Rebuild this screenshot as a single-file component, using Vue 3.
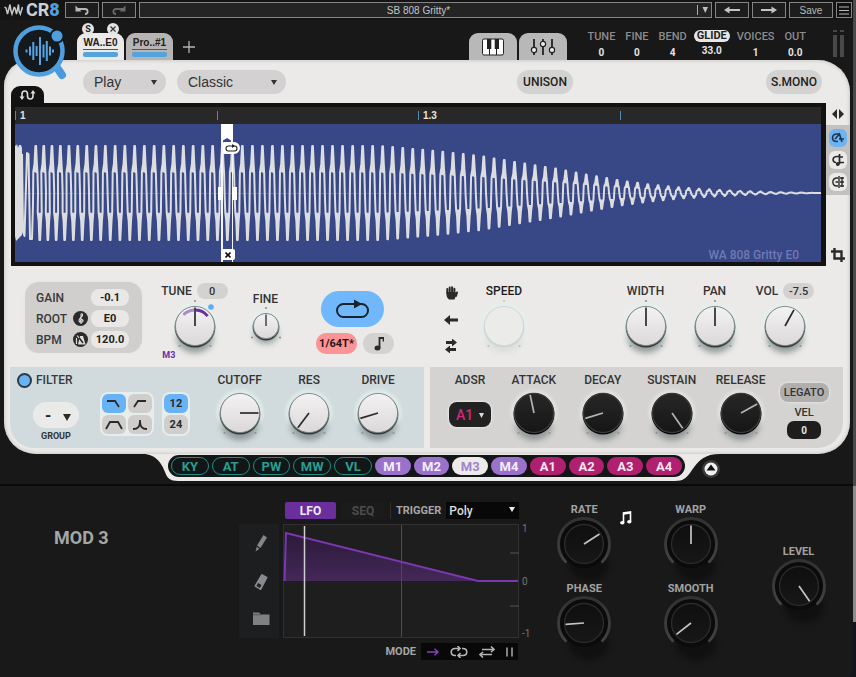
<script setup>
import { h, ref } from 'vue'

const polar = (c, r, deg) => {
  const a = (deg * Math.PI) / 180
  return [c + r * Math.sin(a), c - r * Math.cos(a)]
}
const arc = (c, r, from, to) => {
  const [x1, y1] = polar(c, r, from)
  const [x2, y2] = polar(c, r, to)
  return `M${x1} ${y1}A${r} ${r} 0 ${to - from > 180 ? 1 : 0} 1 ${x2} ${y2}`
}

const Knob = (props) => {
  const kind = props.kind || 'light'
  const r = kind === 'small' ? 13 : 20
  const size = kind === 'small' ? 38 : 54
  const c = size / 2
  const [tx, ty] = polar(c, r - 1.5, props.angle)
  const parts = []
  const dot = (x, y) => h('circle', { cx: x, cy: y, r: 1.1, fill: '#8f9492', opacity: props.off ? 0.4 : 1 })
  if (kind === 'mod') {
    parts.push(
      h('ellipse', { cx: c + 5, cy: c + 21, rx: 20, ry: 16, fill: '#000', opacity: 0.35, filter: 'url(#soft)' }),
      h('circle', { cx: c, cy: c, r: 24, fill: '#0b0b0b' }),
      h('path', { d: arc(c, 25.5, -134, 134), fill: 'none', stroke: 'url(#ring)', 'stroke-width': 2.8, 'stroke-linecap': 'round' }),
      h('circle', { cx: c, cy: c, r: 19.5, fill: 'url(#modface)', stroke: '#2a2a2a', 'stroke-width': 1.4 })
    )
  } else {
    const dark = kind === 'dark'
    parts.push(
      h('circle', { cx: c, cy: c, r: r + 3.5, fill: dark ? '#e6e6e4' : '#e4f0ef', opacity: 0.75, filter: 'url(#soft1)' }),
      h('ellipse', { cx: c, cy: c + r * 0.6, rx: r * 0.9, ry: r * 0.75, fill: '#3a4a4a', opacity: props.off ? 0.08 : 0.5, filter: 'url(#soft)' })
    )
    const b = kind === 'small' ? 14 : 15.5
    const dy = kind === 'small' ? 11.5 : 20
    if (props.top) parts.push(dot(c, c - r - 5))
    parts.push(dot(c - b, c + dy), dot(c + b, c + dy))
    parts.push(
      h('circle', { cx: c, cy: c + 1, r: r + 0.5, fill: dark ? '#060606' : props.off ? '#ced5d4' : 'url(#rim)' }),
      h('circle', { cx: c, cy: c, r: r - 0.4, fill: dark ? 'url(#darkface)' : props.off ? '#ebebea' : 'url(#face)', stroke: dark ? '#3a3a3a' : props.off ? '#d2d6d5' : '#7c8583', 'stroke-width': dark ? 1.4 : 0.9 })
    )
  }
  if (props.arcs) {
    parts.push(
      h('path', { d: arc(c, 16, -46, -3), fill: 'none', stroke: '#a98acb', 'stroke-width': 2.8 }),
      h('path', { d: arc(c, 16, 3, 52), fill: 'none', stroke: '#6a2fa6', 'stroke-width': 2.8 }),
      h('circle', { cx: 43, cy: 8, r: 2.8, fill: '#5aaef5' })
    )
  }
  if (!props.off) {
    parts.push(h('line', {
      x1: c, y1: c, x2: tx, y2: ty,
      stroke: kind === 'dark' ? '#b4b4b4' : kind === 'mod' ? '#c4c4c4' : '#2b2b2b',
      'stroke-width': kind === 'small' ? 1.3 : 1.7
    }))
  }
  return h('span', { class: 'knob' }, [
    h('svg', { width: size, height: size, viewBox: `0 0 ${size} ${size}`, overflow: 'visible', 'aria-hidden': 'true' }, parts),
    h('input', { type: 'range', id: props.id, min: 0, max: 360, value: props.angle, disabled: props.off })
  ])
}
Knob.props = { id: String, angle: Number, kind: String, top: Boolean, off: Boolean, arcs: Boolean }

/* Decaying waveform */
const levels = [[0, 47], [365, 47], [421, 42], [465, 37], [512, 29], [543, 24], [574, 18], [605, 12.5], [635, 8.5], [666, 5.5], [697, 3.5], [728, 2], [755, 1], [806, 0]]
const level = (x) => {
  for (let i = 1; i < levels.length; i++) {
    if (x <= levels[i][0]) {
      const [x0, a0] = levels[i - 1]
      const [x1, a1] = levels[i]
      return a0 + ((a1 - a0) * (x - x0)) / (x1 - x0)
    }
  }
  return 0
}
const mid = 69
let line = 'M7 30L8 108L9.500 112L12 29L13.500 30L15 115L17 115L18 80'
let tips = 'M0 21L1 22L2 20L3 24L4 21L6 21L7 24L7 111L5 113L3 115L1 117L0 112Z'
let px = 20.7
let n = 0
while (px < 800) {
  const P = n < 8 ? 8 + n * 0.2 : px < 200 ? 9.75 : px < 420 ? 10.02 : 10.25
  const A = level(px)
  const H = P / 2
  const B = level(px + H)
  const pt = (dx, a) => `${(px + dx).toFixed(1)} ${(mid + a).toFixed(1)}`
  const crest = `${pt(-2.4, -0.45 * A)}L${pt(-1.2, -0.62 * A)}L${pt(-0.3, -A)}L${pt(0.4, -A)}L${pt(1.2, -0.62 * A)}L${pt(1.8, -0.42 * A)}`
  const trough = `${pt(H - 2, 0.42 * B)}L${pt(H - 1, 0.6 * B)}L${pt(H - 0.3, B)}L${pt(H + 0.4, B)}L${pt(H + 1.3, 0.6 * B)}L${pt(H + 2, 0.42 * B)}`
  line += `L${crest}L${pt(2.3, 0)}L${trough}`
  tips += `M${crest}ZM${trough}Z`
  px += P
  n++
}
line += 'L806 69'

const globals = [
  ['TUNE', '0'], ['FINE', '0'], ['BEND', '4'], ['GLIDE', '33.0'], ['VOICES', '1'], ['OUT', '0.0']
]
const bars = [[15.5, 3], [19, 9], [22.3, 18], [25.6, 10], [29, 28], [32.500, 13], [35.8, 20], [39, 9], [42, 3]]
const rulerMarks = ['1', '', '1.3', '']
const filterShapes = [
  { name: 'Low pass', d: 'M4 6H12L16 12' },
  { name: 'High pass', d: 'M5 12L9 6H17' },
  { name: 'Band pass', d: 'M3 13L7 6H15L19 13' },
  { name: 'Peak', d: 'M4 13C9 13 11 11 11 4C11 11 13 13 18 13' }
]
const filterKnobs = [['CUTOFF', 90], ['RES', 217], ['DRIVE', 253]]
const envKnobs = [['ATTACK', 348], ['DECAY', 253], ['SUSTAIN', 145], ['RELEASE', 61]]
const sources = [
  ['KY', 'ext'], ['AT', 'ext'], ['PW', 'ext'], ['MW', 'ext'], ['VL', 'ext'],
  ['M1', 'mod'], ['M2', 'mod'], ['M3', 'mod'], ['M4', 'mod'],
  ['A1', 'amp'], ['A2', 'amp'], ['A3', 'amp'], ['A4', 'amp']
]
const modKnobs = [['RATE', 57], ['WARP', 0], ['PHASE', 266], ['SMOOTH', 232]]
const selected = ref('M3')
const shape = ref(0)
const filterOn = ref(true)
</script>

<template>
  <div class="window">
    <svg class="defs" width="0" height="0" aria-hidden="true">
      <defs>
        <filter id="soft" x="-50%" y="-50%" width="200%" height="200%"><feGaussianBlur stdDeviation="3" /></filter>
        <filter id="soft1" x="-50%" y="-50%" width="200%" height="200%"><feGaussianBlur stdDeviation="1.5" /></filter>
        <linearGradient id="face" x1="0" y1="0" x2="0" y2="1"><stop offset="0" stop-color="#f3f2f2" /><stop offset="1" stop-color="#dcd8da" /></linearGradient>
        <linearGradient id="rim" x1="0" y1="0" x2="0" y2="1"><stop offset="0" stop-color="#9aa3a1" /><stop offset="1" stop-color="#2f3836" /></linearGradient>
        <linearGradient id="darkface" x1="0" y1="0" x2="0" y2="1"><stop offset="0" stop-color="#272727" /><stop offset="1" stop-color="#161616" /></linearGradient>
        <linearGradient id="modface" x1="0" y1="0" x2="0" y2="1"><stop offset="0" stop-color="#0f0f0f" /><stop offset="1" stop-color="#171717" /></linearGradient>
        <linearGradient id="ring" x1="0" y1="0" x2="0" y2="1"><stop offset="0" stop-color="#323232" /><stop offset="1" stop-color="#424242" /></linearGradient>
        <linearGradient id="lfofill" x1="0" y1="0" x2="0" y2="1"><stop offset="0" stop-color="#2a1a38" /><stop offset="1" stop-color="#452859" /></linearGradient>
      </defs>
    </svg>
    <div class="app">
      <div class="topbar">
        <svg class="waves" width="19" height="14" viewBox="0 0 19 14" aria-hidden="true">
          <path d="M0.500 4L2 5L3.500 11L6 1.500L7 8M6.500 6L8 11L10 5M9.500 4L11 5L12.500 11L14.500 1.500L15 8L16.300 11L18.500 4" fill="none" stroke="#c8c8c8" stroke-width="1.500" />
        </svg>
        <span class="brand">CR<b>8</b></span>
        <button class="tb" aria-label="Undo"><svg width="14" height="10" viewBox="0 0 14 10"><path d="M3 4H10C13.500 4 13.500 9 10 9" fill="none" stroke="#b8b8b8" stroke-width="1.800" /><path d="M0.500 6.500V0.500L6.500 6.500Z" fill="#b8b8b8" /></svg></button>
        <button class="tb" aria-label="Redo"><svg width="14" height="10" viewBox="0 0 14 10"><path d="M11 4H4C0.500 4 0.500 9 4 9" fill="none" stroke="#6a6a6a" stroke-width="1.800" /><path d="M13.500 6.500V0.500L7.500 6.500Z" fill="#6a6a6a" /></svg></button>
        <label class="preset">
          <select aria-label="Preset"><option>SB 808 Gritty*</option></select>
          <svg width="14" height="10" viewBox="0 0 14 10"><path d="M0.500 0V10" stroke="#aaa" /><path d="M5.500 2H11L8.250 8Z" fill="#c0c0c0" /></svg>
        </label>
        <button class="tb" aria-label="Previous preset"><svg width="18" height="8" viewBox="0 0 18 8"><path d="M5 4H17" stroke="#c4c4c4" stroke-width="2" /><path d="M1 4L6.500 0.500V7.500Z" fill="#c4c4c4" /></svg></button>
        <button class="tb" aria-label="Next preset"><svg width="18" height="8" viewBox="0 0 18 8"><path d="M1 4H13" stroke="#c4c4c4" stroke-width="2" /><path d="M17 4L11.500 0.500V7.500Z" fill="#c4c4c4" /></svg></button>
        <button class="tb save">Save</button>
        <button class="tb menu" aria-label="Menu"><svg width="10" height="9" viewBox="0 0 10 9"><path d="M0 1H10M0 4.500H10M0 8H10" stroke="#b8b8b8" /></svg></button>
      </div>

      <header class="header">
        <svg class="logo" width="60" height="60" viewBox="0 0 60 60" aria-hidden="true">
          <path d="M47 46L51 52" stroke="#4a9ade" stroke-width="8" stroke-linecap="round" />
          <circle cx="28" cy="28" r="23.500" fill="#14191e" stroke="#4f9fdf" stroke-width="4.500" />
          <circle cx="46" cy="13" r="7.500" fill="#14191e" />
          <circle cx="46" cy="13" r="5.500" fill="#4f9fdf" />
          <path v-for="b in bars" :key="b[0]" :d="`M${b[0]} ${28 - b[1] / 2}V${28 + b[1] / 2}`" stroke="#55a5e2" stroke-width="2" />
        </svg>
        <div class="tab active">
          <button class="badge" aria-label="Solo"><span>S</span></button>
          <button class="badge right" aria-label="Close"><svg width="8" height="8" viewBox="0 0 8 8"><path d="M1.500 1.500L6.500 6.500M6.500 1.500L1.500 6.500" stroke="#333" stroke-width="1.200" /></svg></button>
          <button class="tabname">WA..E0</button><i class="rule"></i><i class="bar"></i>
        </div>
        <div class="tab">
          <button class="tabname">Pro..#1</button><i class="rule"></i><i class="bar"></i>
        </div>
        <button class="plus" aria-label="Add sample"><svg width="12" height="12" viewBox="0 0 12 12"><path d="M6 0V12M0 6H12" stroke="#b4b4b4" stroke-width="1.300" /></svg></button>
        <span class="grow"></span>
        <button class="view" aria-label="Keyboard"><svg width="22" height="18" viewBox="0 0 22 18"><rect x="0.500" y="1" width="21" height="16" rx="1.500" fill="#fff" stroke="#222" /><path d="M7.500 1V17M14.500 1V17" stroke="#222" /><path d="M5 1H9.300V11H5ZM12.700 1H17V11H12.700Z" fill="#222" /></svg></button>
        <button class="view" aria-label="Mixer"><svg width="26" height="18" viewBox="0 0 26 18"><path d="M4 1V17M13 1V17M22 1V17" stroke="#222" stroke-width="1.800" /><g fill="#eee" stroke="#222" stroke-width="1.200"><circle cx="4" cy="12" r="2.600" /><circle cx="13" cy="6" r="2.600" /><circle cx="22" cy="12" r="2.600" /></g></svg></button>
        <dl class="globals">
          <div v-for="g in globals" :key="g[0]"><dt :class="{ lit: g[0] === 'GLIDE' }">{{ g[0] }}</dt><dd>{{ g[1] }}</dd></div>
        </dl>
        <span class="meter"><i></i><i></i></span>
      </header>

      <main class="body">
        <div class="tools">
          <label class="drop play"><select aria-label="Play mode"><option>Play</option></select><svg width="6" height="5" viewBox="0 0 6 5"><path d="M0 0H6L3 5Z" fill="#333" /></svg></label>
          <label class="drop classic"><select aria-label="Engine"><option>Classic</option></select><svg width="6" height="5" viewBox="0 0 6 5"><path d="M0 0H6L3 5Z" fill="#333" /></svg></label>
          <span class="grow"></span>
          <button class="chip">UNISON</button>
          <span class="gap-mid"></span>
          <button class="chip">S.MONO</button>
          <button class="curve" aria-label="Zero crossing"><svg width="18" height="12" viewBox="0 0 18 12"><path d="M3 9V5C3 1 8.500 1 8.500 5V7C8.500 11 14 11 14 7V3" fill="none" stroke="#ddd" stroke-width="1.600" /><path d="M0.500 7.500H5.500L3 11ZM11.500 4.500H16.500L14 1Z" fill="#ddd" /></svg></button>
        </div>

        <div class="waverow">
          <div class="frame">
            <div class="ruler"><span v-for="(m, i) in rulerMarks" :key="i">{{ m }}</span></div>
            <div class="wave">
              <svg width="100%" height="138" viewBox="0 0 806 138" preserveAspectRatio="none" aria-hidden="true">
                <path d="M0 69.500H806" stroke="#5663a0" />
                <path :d="tips" fill="#dcdddf" />
                <path :d="line" fill="none" stroke="#dcdddf" stroke-width="2" stroke-linejoin="round" />
              </svg>
              <div class="loop">
                <i class="cap"></i>
                <svg class="home" width="8" height="4" viewBox="0 0 8 4"><path d="M0 4V2.500L4 0L8 2.500V4Z" fill="#3a4688" /></svg>
                <button class="looptag" aria-label="Loop handle"><svg width="13" height="8" viewBox="0 0 13 8"><rect x="1" y="2" width="11" height="5" rx="2.500" fill="none" stroke="#222" stroke-width="1.100" /><path d="M7 0L10 2L7 4Z" fill="#222" /></svg></button>
                <i class="grip"></i><i class="grip end"></i>
                <button class="loopx" aria-label="Remove loop"><svg width="6" height="6" viewBox="0 0 6 6"><path d="M0.500 0.500L5.500 5.500M5.500 0.500L0.500 5.500" stroke="#111" stroke-width="1.600" /></svg></button>
              </div>
              <span class="watermark">WA 808 Gritty E0</span>
            </div>
          </div>
          <div class="side">
            <button class="flat" aria-label="Zoom width"><svg width="12" height="10" viewBox="0 0 12 10"><path d="M5 0V10L0 5ZM7 0V10L12 5Z" fill="#2a2a2a" /></svg></button>
            <div class="snaps">
              <button class="on" aria-label="Snap to transients"><svg width="14" height="14" viewBox="0 0 14 14"><path d="M9 3H6C0 3 0 10.500 6 10.500H7M4 8L8.500 3L10 8L11 11M8 8H13" fill="none" stroke="#1d3550" stroke-width="1.600" /></svg></button>
              <button aria-label="Snap to beats"><svg width="14" height="14" viewBox="0 0 14 14"><path d="M9 3.500H6C1 3.500 1 9.500 5 9.500M8.500 1V11M8 4H12M8 9.500H13" fill="none" stroke="#2a2a2a" stroke-width="1.700" /><circle cx="6.800" cy="11" r="2" fill="#2a2a2a" /></svg></button>
              <button aria-label="Snap to grid"><svg width="14" height="14" viewBox="0 0 14 14"><path d="M7 3H6C0.500 3 0.500 11 6 11H7M4.500 7H7M8 1V13M9 3H13M9 7H13M9 11H13M11 2V12" fill="none" stroke="#2a2a2a" stroke-width="1.400" /></svg></button>
            </div>
            <span class="grow"></span>
            <button class="flat" aria-label="Crop"><svg width="14" height="14" viewBox="0 0 14 14"><path d="M3.500 0V10.500H14M0 3.500H10.500V14" fill="none" stroke="#2a2a2a" stroke-width="2.400" /></svg></button>
          </div>
        </div>

        <div class="controls">
          <div class="gaincard">
            <label for="gain">GAIN</label><span></span><input id="gain" value="-0.1">
            <label for="root">ROOT</label>
            <button class="round" aria-label="Detect root"><svg width="14" height="14" viewBox="0 0 14 14"><path d="M7 12V3C7 1 9 1.500 8.500 3.500C8 5 4.500 6.500 5 9C5.500 11 9.500 10.500 9 8.500C8.500 7 6 7.500 6.500 9" fill="none" stroke="#ddd" stroke-width="1.100" /></svg></button>
            <input id="root" value="E0">
            <label for="bpm">BPM</label>
            <button class="round" aria-label="Metronome"><svg width="14" height="14" viewBox="0 0 14 14"><path d="M6 3H9L11.500 11.500H4Z" fill="#ddd" /><path d="M3 2L9 10" stroke="#2b2b2b" stroke-width="1.600" /><path d="M3 2.500L5 5M2.500 5V11" stroke="#ddd" stroke-width="1.200" /></svg></button>
            <input id="bpm" value="120.0">
          </div>
          <div class="cell">
            <div class="lab"><label for="tune">TUNE</label><input aria-label="Tune value" value="0"></div>
            <Knob id="tune" :angle="0" top arcs />
            <span class="tag">M3</span>
          </div>
          <div class="cell fine">
            <label class="lab" for="fine">FINE</label>
            <Knob id="fine" :angle="0" kind="small" top />
          </div>
          <div class="loopbox">
            <button class="bigloop" aria-label="Loop"><svg width="34" height="20" viewBox="0 0 34 20"><rect x="1" y="5" width="31" height="13" rx="6.500" fill="none" stroke="#18222c" stroke-width="2" /><path d="M18 0.500L26 5L18 9.500Z" fill="#18222c" /></svg></button>
            <button class="div">1/64T*</button>
            <button class="note" aria-label="Note sync"><svg width="10" height="14" viewBox="0 0 10 14"><path d="M5.500 11V1H9.500V4.500" fill="none" stroke="#2a2a2a" stroke-width="1.800" /><ellipse cx="3.500" cy="11" rx="3" ry="2.500" fill="#2a2a2a" /></svg></button>
          </div>
          <div class="dirs">
            <button aria-label="Hold"><svg width="14" height="14" viewBox="0 0 14 14"><path d="M3.300 7V3M5.700 7V1.500M8.100 7V1.200M10.400 7.500V2.700M12 10L13 6.500" stroke="#2a2a2a" stroke-width="2" stroke-linecap="round" /><path d="M2.400 6H11.300L12.500 8L10.500 13.500H5C2.500 12 2.400 9 2.400 6Z" fill="#2a2a2a" /></svg></button>
            <button aria-label="Reverse"><svg width="14" height="10" viewBox="0 0 14 10"><path d="M0 5L6 0V3.500H14V6.500H6V10Z" fill="#2a2a2a" /></svg></button>
            <button aria-label="Ping-pong"><svg width="12" height="14" viewBox="0 0 12 14"><path d="M12 3.500L7 -0.500V2H1V5H7V7.500ZM0 10.500L5 6.500V9H11V12H5V14.500Z" fill="#2a2a2a" /></svg></button>
          </div>
          <div class="cell"><label class="lab strong" for="speed">SPEED</label><Knob id="speed" :angle="0" top off /></div>
          <span></span>
          <div class="cell"><label class="lab" for="width">WIDTH</label><Knob id="width" :angle="0" top /></div>
          <div class="cell"><label class="lab" for="pan">PAN</label><Knob id="pan" :angle="0" top /></div>
          <div class="cell">
            <div class="lab"><label for="vol">VOL</label><input aria-label="Volume value" value="-7.5"></div>
            <Knob id="vol" :angle="29" />
          </div>
        </div>

        <div class="panels">
          <section class="filter">
            <div class="fleft">
              <label class="power"><input v-model="filterOn" type="checkbox">FILTER</label>
              <label class="group"><select aria-label="Filter group"><option>-</option></select><svg width="8" height="7" viewBox="0 0 8 7"><path d="M0 0H8L4 7Z" fill="#2a2a2a" /></svg></label>
              <span class="tiny">GROUP</span>
            </div>
            <div class="shapes">
              <div class="pad two">
                <button v-for="(s, i) in filterShapes" :key="s.name" :class="{ on: i === shape }" :aria-label="s.name" @click="shape = i"><svg width="22" height="18" viewBox="0 0 22 18"><path :d="s.d" fill="none" stroke="#2a2a2a" stroke-width="1.800" /></svg></button>
              </div>
              <div class="pad"><button class="on">12</button><button>24</button></div>
            </div>
            <div v-for="k in filterKnobs" :key="k[0]" class="cell">
              <label class="lab" :for="k[0]">{{ k[0] }}</label><Knob :id="k[0]" :angle="k[1]" />
            </div>
          </section>
          <section class="env">
            <div class="adsr">
              <label class="lab" for="adsr">ADSR</label>
              <span class="a1"><select id="adsr"><option>A1</option></select><svg width="5" height="5" viewBox="0 0 5 5"><path d="M0 0H5L2.500 5Z" fill="#ddd" /></svg></span>
            </div>
            <div v-for="k in envKnobs" :key="k[0]" class="cell">
              <label class="lab" :for="k[0]">{{ k[0] }}</label><Knob :id="k[0]" :angle="k[1]" kind="dark" />
            </div>
            <div class="vel">
              <button>LEGATO</button>
              <label for="vel">VEL</label>
              <input id="vel" value="0">
            </div>
          </section>
        </div>
      </main>

      <nav class="dock">
        <svg width="40" height="27" viewBox="0 0 40 27" aria-hidden="true"><path d="M0 0H5C18 0 24 10 27 18C29 24 32 27 40 27V0Z" fill="#ebeae8" /></svg>
        <div class="dockmid">
          <div class="pills">
            <button v-for="s in sources" :key="s[0]" :class="[s[1], { sel: s[0] === selected }]" @click="selected = s[0]">{{ s[0] }}</button>
          </div>
        </div>
        <svg width="45" height="27" viewBox="0 0 45 27" aria-hidden="true"><path d="M0 0H45C30 0 24 6 17 16C12 24 8 27 0 27Z" fill="#ebeae8" /></svg>
        <div class="dockend">
          <button aria-label="Collapse"><svg width="18" height="18" viewBox="0 0 18 18"><circle cx="9" cy="9" r="9" fill="#3b3b3b" /><circle cx="9" cy="9" r="6.500" fill="#f2f2f2" /><path d="M9 4.500L13.500 10.500H4.500Z" fill="#111" /></svg></button>
        </div>
      </nav>

      <section class="modulator">
        <h2>MOD 3</h2>
        <div class="editor">
          <div class="modtop">
            <button class="lfo">LFO</button><button class="seq">SEQ</button>
            <label for="trigger">TRIGGER</label>
            <span class="trig"><select id="trigger"><option>Poly</option></select><svg width="6" height="5" viewBox="0 0 6 5"><path d="M0 0H6L3 5Z" fill="#eee" /></svg></span>
          </div>
          <div class="pens">
            <button aria-label="Pencil"><svg width="14" height="18" viewBox="0 0 14 18"><path d="M9.500 1L13 3.500L6.500 14L3 11.500ZM2.700 12.700L5.500 14.700L1.500 17.500Z" fill="#858585" /></svg></button>
            <button aria-label="Eraser"><svg width="16" height="18" viewBox="0 0 16 18"><path d="M9 2L13.500 4.500L7.500 16L2.500 13Z" fill="#8a8a8a" stroke="#8a8a8a" stroke-width="2" stroke-linejoin="round" /><path d="M5 10L8.500 12L6.800 15L3.500 13Z" fill="#222" /></svg></button>
            <button aria-label="Open"><svg width="17" height="13" viewBox="0 0 17 13"><path d="M0 0.500H6L8 2.500H16.500V13H0Z" fill="#808080" /><path d="M0 2.700H8" stroke="#444" stroke-width="0.700" /></svg></button>
          </div>
          <svg class="graph" width="100%" height="114" viewBox="0 0 236 114" preserveAspectRatio="none" role="img" aria-label="LFO shape">
            <rect x="0.500" y="0.500" width="235" height="113" fill="#1e1e1e" stroke="#303030" />
            <path d="M1.500 57L3 9L195 57Z" fill="url(#lfofill)" />
            <path d="M118.500 1V113" stroke="#4c4c4c" />
            <path d="M227 29H236M227 82H236" stroke="#555" />
            <path d="M1.500 57L3 9L195 57H235" fill="none" stroke="#7a38b0" stroke-width="2" />
            <path d="M21.500 2V112" stroke="#cfcfcf" stroke-width="1.500" />
          </svg>
          <div class="scale"><span>1</span><span>0</span><span>-1</span></div>
          <div class="mode">
            <span>MODE</span>
            <div>
              <button aria-label="One shot"><svg width="12" height="8" viewBox="0 0 12 8"><path d="M0 4H11M7.500 0.800L11 4L7.500 7.200" fill="none" stroke="#8a3fc6" stroke-width="1.500" /></svg></button>
              <button aria-label="Loop"><svg width="18" height="12" viewBox="0 0 18 12"><path d="M6 9.500H5C0 9.500 0 2.500 5 2.500H10M12 2.500H13C18 2.500 18 9.500 13 9.500H8M7.500 0L10 2.500L7.500 5M10.500 7L8 9.500L10.500 12" fill="none" stroke="#b4b4b4" stroke-width="1.600" /></svg></button>
              <button aria-label="Ping-pong"><svg width="16" height="12" viewBox="0 0 16 12"><path d="M3 3.500H15M12 0.500L15 3.500L12 6M13 8.500H1M4 6L1 8.500L4 11.500" fill="none" stroke="#b4b4b4" stroke-width="1.600" /></svg></button>
              <button aria-label="Hold"><svg width="7" height="10" viewBox="0 0 7 10"><path d="M1 0.500V9.500M6 0.500V9.500" stroke="#aaa" stroke-width="1.500" /></svg></button>
            </div>
          </div>
        </div>
        <div class="modknobs">
          <div v-for="k in modKnobs" :key="k[0]" class="mk">
            <label :for="k[0]">{{ k[0] }}</label><Knob :id="k[0]" :angle="k[1]" kind="mod" />
            <button v-if="k[0] === 'RATE'" class="sync" aria-label="Tempo sync"><svg width="12" height="14" viewBox="0 0 12 14"><path d="M3.500 11.500V2L10.500 1V10.500M3.500 3L10.500 2" fill="none" stroke="#fff" stroke-width="1.600" /><ellipse cx="2.300" cy="11.800" rx="2.200" ry="1.800" fill="#fff" /><ellipse cx="9.300" cy="10.800" rx="2.200" ry="1.800" fill="#fff" /></svg></button>
          </div>
        </div>
        <div class="mk lone"><label for="level">LEVEL</label><Knob id="level" :angle="145" kind="mod" /></div>
      </section>
    </div>
  </div>
</template>

<style>
body { margin: 0; background: #171717; }
.knob { position: relative; display: block; line-height: 0; }
.knob input { position: absolute; inset: 0; width: 100%; height: 100%; margin: 0; opacity: 0; cursor: pointer; }
</style>

<style scoped>
.window {
  font-family: Roboto, "Liberation Sans", sans-serif;
  font-size: 12px;
  padding-right: 3px;
  background: linear-gradient(#4a4a4a 0 486px, #8c8c8c 486px 622px, #11151c 622px);
}
.defs { position: absolute; }
.app { min-height: 100vh; background: #181818; display: flex; flex-direction: column; border-bottom-right-radius: 6px; }
button, input, select { font-family: inherit; border: 0; padding: 0; margin: 0; background: none; color: inherit; box-sizing: border-box; }
button { display: flex; align-items: center; justify-content: center; cursor: pointer; }
select { appearance: none; outline: 0; }
.grow { flex: 1; }

.topbar { height: 20px; display: flex; align-items: center; gap: 3px; padding: 0 1px 0 4px; background: #141414; box-sizing: border-box; }
.waves { flex: none; }
.brand { width: 36px; font-size: 18px; line-height: 20px; font-weight: 700; color: #cfcfcf; }
.brand b { color: #4f9fdf; }
.tb { width: 34px; height: 16px; border: 1px solid #858585; background: #1d1d1d; flex: none; }
.save { width: 44px; font: 10px "Liberation Sans", sans-serif; color: #b8b8b8; }
.menu { width: 16px; background: #111; }
.preset { flex: 1; display: flex; align-items: center; height: 16px; border: 1px solid #858585; background: #242424; box-sizing: border-box; }
.preset select { flex: 1; font: 10px "Liberation Sans", sans-serif; color: #c4c4c4; text-align-last: center; }

.header { position: relative; z-index: 2; height: 40px; box-sizing: border-box; padding: 0 9px 0 77px; display: flex; align-items: flex-end; gap: 2px; }
.logo { position: absolute; left: 11px; top: 3px; }
.tab { position: relative; width: 47px; height: 27px; background: #b6b5b4; border-radius: 9px 9px 0 0; padding: 4px 6px 0; box-sizing: border-box; }
.tab.active { background: #ebeae8; }
.tabname { width: 100%; height: 12px; font: 700 10px/12px "Liberation Sans", sans-serif; color: #222; white-space: nowrap; }
.rule { display: block; height: 1px; background: #555; }
.bar { display: block; height: 5px; margin-top: 2px; border-radius: 2px; background: #55a3dd; }
.badge { position: absolute; left: 5px; top: -10px; width: 12px; height: 12px; border-radius: 50%; background: #e4e4e4; color: #222; font-size: 9px; font-weight: 700; line-height: 12px; }
.badge.right { left: auto; right: 5px; }
.plus { height: 27px; width: 27px; }
.view { width: 48px; height: 27px; background: #b9b8b8; border-radius: 9px 9px 0 0; }
.globals { margin: 0 25px 0 18px; height: 30px; display: flex; gap: 10px; font-size: 11px; text-align: center; }
.globals dt { height: 14px; line-height: 14px; color: #8c8c8c; font-weight: 500; }
.globals dt.lit { background: #e6e6e6; color: #222; border-radius: 6px; height: 12px; line-height: 12px; margin: 0 -3px 2px; padding: 0 3px; font-weight: 700; }
.globals dd { margin: 2px 0 0; height: 13px; line-height: 13px; font-size: 10px; font-weight: 700; color: #e4e4e4; }
.meter { display: flex; gap: 3px; height: 30px; }
.meter i { width: 4px; height: 27px; background: linear-gradient(#484848 0 2px, #181818 2px 5px, #484848 5px); }

.body { margin: 0 3px 0 4px; background: #ebeae8; border-radius: 26px 32px 32px 32px; padding: 0 6px 6px; box-shadow: inset 0 0 4px #bcbcb8; }
.tools { position: relative; height: 43px; display: flex; align-items: flex-start; padding: 10px 22px 0 73px; gap: 11px; box-sizing: border-box; }
.drop { position: relative; height: 24px; border-radius: 12px; background: #d3d1d1; display: flex; align-items: center; }
.drop select { width: 100%; height: 24px; padding-left: 11px; font: 14px "Liberation Sans", sans-serif; color: #333; border-radius: 12px; }
.drop svg { position: absolute; right: 9px; top: 10px; }
.play { width: 83px; }
.classic { width: 109px; }
.chip { height: 24px; width: 56px; border-radius: 12px; background: #d3d2d1; font-weight: 500; font-size: 12px; color: #222; box-shadow: 0 0 3px #dcebee; }
.gap-mid { width: 171px; }
.curve { position: absolute; left: 1px; bottom: 0; width: 33px; height: 17px; background: #121212; border-radius: 9px 9px 0 0; }

.waverow { display: flex; margin: 0 -6px 0 1px; }
.frame { flex: 1; min-width: 0; background: #121212; padding: 4px 5px 4px 4px; }
.ruler { height: 17px; display: grid; grid-template-columns: repeat(4, 1fr); align-items: center; background: #282828; color: #e4e4e4; font: 700 10px/9px "Liberation Sans", sans-serif; }
.ruler span { height: 9px; border-left: 1px solid #5288b4; padding-left: 4px; }
.wave { position: relative; height: 138px; background: #384786; }
.wave > svg { display: block; }
.watermark { position: absolute; right: 22px; bottom: 0; font-size: 12px; font-weight: 500; line-height: 14px; color: #6e79b6; }
.loop { position: absolute; left: 25.500%; top: 0; bottom: 0; width: 12px; border: 1px solid #f4f4f4; border-width: 0 1px 0 2px; box-sizing: border-box; }
.cap { position: absolute; left: -2px; right: -1px; top: 0; height: 18px; background: #fff; }
.home { position: absolute; left: 0; top: 14px; }
.looptag { position: absolute; left: 0; top: 18px; width: 17px; height: 12px; border-radius: 1px 6px 6px 1px; background: #fff; }
.grip { position: absolute; left: -5px; top: 63px; width: 5px; height: 13px; background: #fff; }
.grip.end { left: 9px; }
.loopx { position: absolute; left: -2px; bottom: 2px; width: 14px; height: 11px; border-radius: 2px; background: #fff; }
.side { width: 24px; display: flex; flex-direction: column; align-items: center; }
.flat { height: 22px; width: 24px; }
.snaps { width: 24px; height: 70px; background: #c3c1bf; display: flex; flex-direction: column; align-items: center; justify-content: center; gap: 4px; }
.snaps button { width: 18px; height: 18px; border-radius: 6px; background: #eceae8; }
.snaps .on { background: #6fb4f2; }

.controls { height: 101px; margin: 0 -6px; display: grid; grid-template-columns: minmax(0, 146fr) minmax(0, 89fr) minmax(0, 53fr) minmax(0, 128fr) minmax(0, 62fr) minmax(0, 44fr) minmax(0, 85fr) minmax(0, 69fr) minmax(0, 69fr) minmax(0, 72fr) minmax(0, 29fr); justify-items: center; align-items: start; }
.gaincard { justify-self: stretch; margin: 16px 8px 0 21px; height: 71px; padding: 7px 13px 9px 11px; border-radius: 14px; background: #d0cfce; box-sizing: border-box; display: grid; grid-template-columns: 35px 16px 38px; grid-auto-rows: 17px; row-gap: 4px; justify-content: space-between; align-items: center; box-shadow: 0 0 3px #dce4e4; }
.gaincard label { font-weight: 500; color: #3a3a3a; }
.gaincard input { width: 38px; height: 17px; border-radius: 8px; background: #e9e8e7; text-align: center; font-size: 11px; font-weight: 700; color: #222; }
.round { width: 15px; height: 15px; border-radius: 50%; background: #2b2b2b; }
.cell { position: relative; display: flex; flex-direction: column; align-items: center; padding-top: 17px; }
.lab { height: 16px; line-height: 17px; font-weight: 500; color: #333; display: flex; align-items: center; gap: 5px; white-space: nowrap; }
.lab.strong { color: #1c1c1c; }
.lab input { width: 31px; height: 16px; border-radius: 8px; background: #d3d2d1; text-align: center; font-size: 11px; font-weight: 500; color: #333; }
.tag { position: absolute; left: 1px; top: 84px; font-size: 9px; font-weight: 700; line-height: 11px; color: #6a2fa6; }
.fine { padding-top: 25px; }
.loopbox { justify-self: start; margin: 25px 0 0 24px; width: 79px; display: flex; flex-wrap: wrap; gap: 6px; }
.bigloop { width: 63px; height: 36px; margin-left: 5px; border-radius: 18px; background: #70b8fb; }
.div { width: 41px; height: 21px; border-radius: 10px; background: #fb9496; font-size: 11px; font-weight: 700; color: #2a1515; }
.note { width: 31px; height: 21px; border-radius: 10px; background: #d3d2d1; }
.dirs { display: flex; flex-direction: column; align-items: center; justify-content: space-between; height: 67px; margin-top: 20px; }

.panels { display: grid; grid-template-columns: 1fr 1fr; gap: 6px; padding-right: 1px; }
.panels section { height: 81px; display: grid; justify-items: center; align-items: start; }
.panels .cell { padding-top: 5px; }
.panels .cell .lab { margin-bottom: -2px; }
.filter { background: #d1dbde; grid-template-columns: 84fr 102fr 9fr 70fr 69fr 69fr 11fr; border-bottom-left-radius: 24px; }
.filter .cell:nth-of-type(3) { grid-column: 4; }
.fleft { display: flex; flex-direction: column; align-items: center; width: 100%; }
.power { align-self: flex-start; margin: 5px 0 0 7px; height: 16px; display: flex; align-items: center; gap: 4px; font-weight: 500; color: #3a3a3a; }
.power input { appearance: none; width: 15px; height: 15px; border: 2px solid #2c3a47; border-radius: 50%; background: #e0e0e0; }
.power input:checked { background: #68b2f7; }
.group { position: relative; width: 46px; height: 26px; margin-top: 14px; margin-left: 8px; border-radius: 13px; background: #eaeae9; }
.group select { width: 46px; height: 26px; padding-left: 12px; font-size: 16px; font-weight: 700; color: #222; }
.group svg { position: absolute; right: 8px; top: 12px; }
.tiny { margin: 3px 0 0 8px; font-size: 9px; font-weight: 700; line-height: 11px; color: #333; }
.shapes { display: flex; gap: 8px; margin-top: 25px; justify-self: start; padding-left: 6px; }
.pad { display: grid; gap: 2px; padding: 2px; border-radius: 8px; background: #e7ecec; }
.pad.two { grid-template-columns: 1fr 1fr; }
.pad button { width: 24px; height: 19px; border-radius: 6px; background: #cfcecd; font-size: 11px; font-weight: 700; color: #2a2a2a; }
.pad .on { background: #68b2f7; }
.env { background: #d4d3d1; grid-template-columns: 11fr 59fr 69fr 69fr 69fr 69fr 58fr 10fr; border-bottom-right-radius: 26px; }
.adsr { grid-column: 2; padding-top: 5px; display: flex; flex-direction: column; align-items: center; }
.a1 { position: relative; margin-top: 14px; width: 42px; height: 25px; border-radius: 8px; background: #222; box-shadow: 0 0 2px 1px #e8e8e8; }
.a1 select { width: 42px; height: 25px; padding-left: 7px; font-size: 14px; font-weight: 500; color: #d0287f; }
.a1 svg { position: absolute; right: 7px; top: 11px; }
.vel { display: flex; flex-direction: column; align-items: center; padding-top: 16px; color: #333; font-weight: 500; font-size: 11px; }
.vel button { width: 49px; height: 19px; border-radius: 8px; background: #b0afae; font-size: 11px; font-weight: 500; box-shadow: 0 0 2px 1px #dfe4e4; }
.vel label { line-height: 13px; margin: 4px 0 2px; }
.vel input { width: 34px; height: 18px; border-radius: 7px; background: #1d1d1d; color: #e4e4e4; text-align: center; font-size: 10px; font-weight: 700; }

.dock { display: flex; height: 27px; padding-left: 138px; }
.dock > svg { flex: none; display: block; }
.dockmid { flex: 497 1 0; background: #ebeae8; }
.pills { position: relative; height: 22px; margin: 1px -10px 0; padding: 2px 3px; box-sizing: border-box; display: flex; gap: 3px; border-radius: 11px; background: #131617; }
.pills button { flex: 1; border-radius: 9px; font-size: 13px; font-weight: 700; }
.pills .ext { border: 1px solid #1f8d81; color: #2a9d90; }
.pills .mod { background: #9b72cb; color: #f4eefa; }
.pills .amp { background: #b0206f; color: #f6e8f0; }
.pills .mod.sel { background: #ecebe9; color: #a383cd; }
.dockend { flex: 151 1 0; margin-left: -18px; padding-top: 6px; }

.modulator { flex: 1; margin-top: 3px; border-top: 2px solid #090909; display: grid; grid-template-columns: 239fr 292fr 213fr 109fr; align-items: start; background: #191919; border-bottom-right-radius: 6px; }
h2 { margin: 41px 0 0 54px; font-size: 18px; line-height: 22px; font-weight: 700; color: #a6a6a6; }
.editor { margin-top: 16px; display: grid; grid-template-columns: 40px 1fr 8px; grid-template-rows: 17px 114px 17px; column-gap: 4px; row-gap: 5px; }
.modtop { grid-column: 2; display: flex; align-items: center; color: #a6a6a6; font-weight: 700; padding-left: 2px; gap: 5px; }
.modtop button { height: 17px; font-size: 12px; font-weight: 700; border-radius: 2px; }
.lfo { width: 51px; background: #6a2f9c; color: #f0eaf6; }
.seq { width: 44px; color: #4c4c4c; background: #1b1b1b; }
.modtop label { border-left: 1px solid #2c2c2c; padding-left: 5px; font-size: 11px; line-height: 17px; }
.trig { position: relative; flex: 1; height: 17px; background: #080808; }
.trig select { width: 100%; height: 17px; padding-left: 3px; font-size: 12px; font-weight: 500; color: #ddd; }
.trig svg { position: absolute; right: 4px; top: 5px; }
.pens { grid-column: 1; grid-row: 2; background: #1c1e20; display: flex; flex-direction: column; align-items: center; justify-content: space-between; padding: 10px 0 13px 4px; box-sizing: border-box; }
.graph { grid-column: 2; grid-row: 2; display: block; }
.scale { grid-column: 3; grid-row: 2; display: flex; flex-direction: column; justify-content: space-between; font-size: 10px; line-height: 9px; color: #777; margin-left: -1px; }
.mode { grid-column: 2; display: flex; justify-content: flex-end; align-items: center; gap: 5px; font-size: 11px; font-weight: 700; color: #a6a6a6; padding-right: 1px; }
.mode div { display: flex; align-items: center; justify-content: space-between; width: 97px; height: 17px; padding: 0 5px 0 6px; box-sizing: border-box; background: #080808; }
.modknobs { display: grid; grid-template-columns: 1fr 1fr; row-gap: 11px; padding-top: 17px; }
.mk { position: relative; display: flex; flex-direction: column; align-items: center; font-size: 11px; line-height: 14px; font-weight: 700; color: #a2a2a2; }
.lone { padding-top: 59px; }
.sync { position: absolute; left: calc(50% + 36px); top: 8px; }
</style>
